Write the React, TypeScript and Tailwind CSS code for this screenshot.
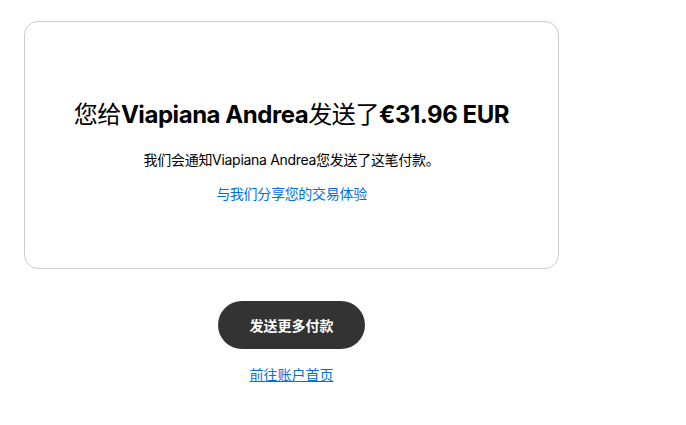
export default function App() {
  const cjk = '"Noto Sans CJK SC", sans-serif'
  return (
    <div className="w-[686px] h-[425px] bg-white" style={{ fontFamily: `Inter, ${cjk}` }}>
      <div className="ml-6 pt-[21px] w-[535px] flex flex-col items-center">
        {/* Result card */}
        <div className="w-full h-[248px] border border-[#cccccc] rounded-[14px] flex flex-col items-center pt-[77px]">
          <h1 className="text-[24px] leading-[32px] text-black tracking-[-0.45px]">
            <span className="font-normal">您给</span>
            <span className="font-bold">Viapiana Andrea</span>
            <span className="font-normal">发送了</span>
            <span className="font-bold">€31.96 EUR</span>
          </h1>
          <p className="mt-[19px] text-[14px] leading-5 text-black tracking-[-0.3px]">
            我们会通知Viapiana Andrea您发送了这笔付款。
          </p>
          <a href="#" className="mt-[14px] text-[14px] leading-5 text-[#0070e0] tracking-[-0.3px]">
            与我们分享您的交易体验
          </a>
        </div>

        <button className="mt-8 w-[147px] h-12 rounded-full bg-[#333333] text-white text-[14px] font-bold">
          发送更多付款
        </button>
        <a href="#" className="mt-4 text-[14px] leading-5 text-[#0070e0] underline">
          前往账户首页
        </a>
      </div>
    </div>
  )
}
